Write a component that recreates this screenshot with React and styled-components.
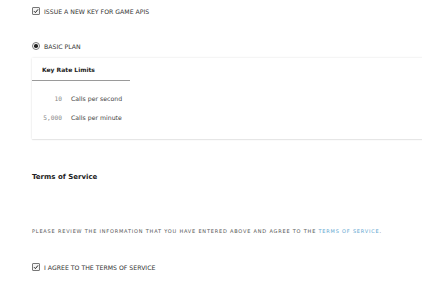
import React from 'react'
import styled, { createGlobalStyle } from 'styled-components'

const Global = createGlobalStyle`
    body {
        margin: 0;
        background: #fff;
        font-family: "DejaVu Sans", Verdana, sans-serif;
        color: #333;
    }
`

const Page = styled.div`
    width: 422px;
    height: 300px;
    overflow: hidden;
    padding: 7px 0 0 32px;
    box-sizing: border-box;
`

const OptionRow = styled.label`
    display: flex;
    align-items: center;
    gap: 4px;
    height: 8px;
    font-size: 6.2px;
    text-transform: uppercase;
    color: #333;
    margin-top: ${p => p.$top || 0}px;
`

const Box = styled.span`
    width: 6px;
    height: 6px;
    border: 0.6px solid #777;
    border-radius: 1px;
    display: flex;
    align-items: center;
    justify-content: center;
    background: #f4f4f4;
`

const Radio = styled.span`
    width: 6px;
    height: 6px;
    border: 0.6px solid #777;
    border-radius: 50%;
    display: flex;
    align-items: center;
    justify-content: center;
    &::after {
        content: '';
        width: 3.5px;
        height: 3.5px;
        border-radius: 50%;
        background: #222;
    }
`

const Card = styled.div`
    margin-top: 8px;
    margin-right: -10px;
    background: #fff;
    box-shadow: 0 0 2px rgba(0, 0, 0, 0.12), 0 1px 1px rgba(0, 0, 0, 0.06);
    padding-bottom: 17px;
`

const CardTab = styled.div`
    width: 98px;
    height: 23px;
    box-sizing: border-box;
    padding: 8px 0 0 10px;
    border-bottom: 1px solid #9a9a9a;
    font-size: 6px;
    font-weight: bold;
    line-height: 8px;
    color: #222;
`

const Limits = styled.div`
    padding-top: 14px;
    display: grid;
    grid-template-columns: 30px auto;
    column-gap: 9px;
    row-gap: 11px;
    font-size: 6.2px;
    line-height: 8px;
`

const Num = styled.span`
    font-family: "DejaVu Sans Mono", monospace;
    color: #888;
    text-align: right;
`

const Label = styled.span`
    color: #444;
`

const Heading = styled.h3`
    margin: 34px 0 0;
    font-size: 7px;
    line-height: 8px;
    font-weight: bold;
    color: #222;
`

const Notice = styled.p`
    margin: 46px 0 0;
    font-size: 5px;
    line-height: 8px;
    letter-spacing: 0.8px;
    text-transform: uppercase;
    color: #555;
`

const Link = styled.a`
    color: #5ea6cf;
    text-decoration: none;
`

const Check = () => (
    <Box>
        <svg width="6" height="6" viewBox="0 0 6 6">
            <path d="M1 3.2 L2.4 4.6 L5 1.4" stroke="#222" strokeWidth="1" fill="none" />
        </svg>
    </Box>
)

export default function App() {
    return (
        <Page>
            <Global />
            <OptionRow><Check />Issue a new key for game APIs</OptionRow>
            <OptionRow $top={27}><Radio />Basic plan</OptionRow>
            <Card>
                <CardTab>Key Rate Limits</CardTab>
                <Limits>
                    <Num>10</Num><Label>Calls per second</Label>
                    <Num>5,000</Num><Label>Calls per minute</Label>
                </Limits>
            </Card>
            <Heading>Terms of Service</Heading>
            <Notice>
                Please review the information that you have entered above and agree to the <Link href="#">Terms of Service</Link>.
            </Notice>
            <OptionRow $top={28}><Check />I agree to the terms of service</OptionRow>
        </Page>
    )
}
